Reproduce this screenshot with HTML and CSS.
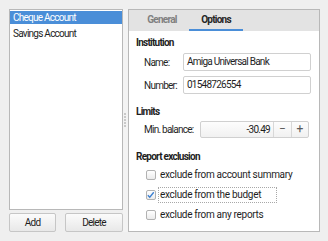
FILE: index.html
```html
<!DOCTYPE html>
<html lang="en">
<head>
    <meta charset="UTF-8">
    <title>Accounts</title>
    <link rel="stylesheet" href="styles.css">
</head>
<body>
    <div class="window">
        <div class="side">
            <div class="account-list">
                <div class="account selected">Cheque Account</div>
                <div class="account">Savings Account</div>
            </div>
            <div class="side-buttons">
                <button class="btn add">Add</button>
                <button class="btn delete">Delete</button>
            </div>
        </div>
        <div class="splitter"><span class="grip"></span></div>
        <div class="panel">
            <div class="tabs">
                <div class="tab">General</div>
                <div class="tab active">Options</div>
            </div>
            <div class="page">
                <div class="group-title">Institution</div>
                <div class="form-row name-row">
                    <label class="lbl">Name:</label>
                    <div class="field">Amiga Universal Bank</div>
                </div>
                <div class="form-row number-row">
                    <label class="lbl">Number:</label>
                    <div class="field">01548726554</div>
                </div>

                <div class="group-title limits">Limits</div>
                <div class="form-row limit-row">
                    <label class="lbl">Min. balance:</label>
                    <div class="spin">
                        <div class="spin-value">-30.49</div>
                        <div class="spin-btn">&minus;</div>
                        <div class="spin-btn">+</div>
                    </div>
                </div>

                <div class="group-title reports">Report exclusion</div>
                <div class="checks">
                    <div class="check"><span class="box"></span><span class="check-text">exclude from account summary</span></div>
                    <div class="check"><span class="box"><svg width="10" height="10" viewBox="0 0 10 10"><path d="M2 5.2 L4.2 7.4 L8.6 2" fill="none" stroke="#3b7fd0" stroke-width="1.5"/></svg></span><span class="check-text focus">exclude from the budget</span></div>
                    <div class="check"><span class="box"></span><span class="check-text">exclude from any reports</span></div>
                </div>
            </div>
        </div>
    </div>
</body>
</html>
```

FILE: styles.css
```css
* { box-sizing: border-box; }
body { margin: 0; background: #efefef; font-family: Roboto, "Liberation Sans", sans-serif; font-size: 10px; letter-spacing: -0.75px; color: #1e1e1e; }
.window { display: flex; padding: 9px 0 0 9px; height: 241px; }

/* account list */
.side { width: 114px; height: 223px; display: flex; flex-direction: column; }
.account-list { height: 201px; background: #fff; border: 1px solid #b8b8b8; padding: 1px 0 0 0; }
.account { height: 13px; line-height: 13px; padding-left: 3px; margin-bottom: 3px; }
.account.selected { background: #4a8ed8; color: #fff; }
.side-buttons { display: flex; justify-content: space-between; margin-top: 3px; height: 19px; }
.btn { height: 19px; font: inherit; letter-spacing: inherit; color: #1e1e1e; border: 1px solid #c6c6c6; border-radius: 2px; background: linear-gradient(#fbfbfb, #e8e8e8); padding: 0; }
.btn.add { width: 47px; }
.btn.delete { width: 58px; }

.splitter { width: 5px; height: 223px; background: #f3f3f3; display: flex; align-items: center; justify-content: center; }
.grip { width: 2px; height: 15px; margin-left: -1px; background: repeating-linear-gradient(#c9c9c9 0 2px, transparent 2px 3px); }

/* options panel */
.panel { width: 192px; height: 223px; border: 1px solid #b8b8b8; background: #fff; }
.tabs { display: flex; height: 21px; background: #e3e3e3; padding-left: 6px; }
.tab { width: 54px; text-align: center; line-height: 19px; color: #808080; font-weight: bold; }
.tab.active { color: #262626; border-bottom: 2px solid #4a8ed8; }

.page { padding: 4px 0 0 7px; }
.group-title { font-weight: bold; height: 16px; line-height: 16px; }
.group-title.limits { margin-top: 10px; }
.group-title.reports { margin-top: 11px; }
.form-row { display: flex; align-items: center; padding-left: 8px; }
.name-row { margin-top: 2px; }
.number-row { margin-top: 5px; }
.limit-row { margin-top: 1px; }
.lbl { width: 39px; color: #262626; white-space: nowrap; }
.limit-row .lbl { width: 56px; }
.field { width: 128px; height: 18px; line-height: 16px; border: 1px solid #d0d0d0; border-radius: 2px; padding-left: 3px; }
.spin { display: flex; width: 109px; height: 17px; border: 1px solid #d0d0d0; border-radius: 2px; background: linear-gradient(#fdfdfd, #f1f1f1); }
.spin-value { flex: 1; text-align: right; line-height: 15px; padding-right: 3px; }
.spin-btn { width: 18px; border-left: 1px solid #d8d8d8; text-align: center; line-height: 15px; color: #5a5a5a; font-size: 12px; letter-spacing: 0; }
.spin-btn:last-child { width: 17px; }

.checks { padding-left: 10px; }
.check { display: flex; align-items: center; height: 20px; }
.box { width: 10px; height: 10px; border: 1px solid #b2b2b2; border-radius: 2px; background: linear-gradient(#fff, #ebebeb); margin-right: 2px; display: flex; }
.box svg { margin: -1px 0 0 -1px; }
.check-text { height: 16px; line-height: 14px; padding: 0 1px; border: 1px dotted transparent; white-space: nowrap; letter-spacing: -0.3px; }
.check-text.focus { border-color: #a8a8a8; width: 119px; }
```
